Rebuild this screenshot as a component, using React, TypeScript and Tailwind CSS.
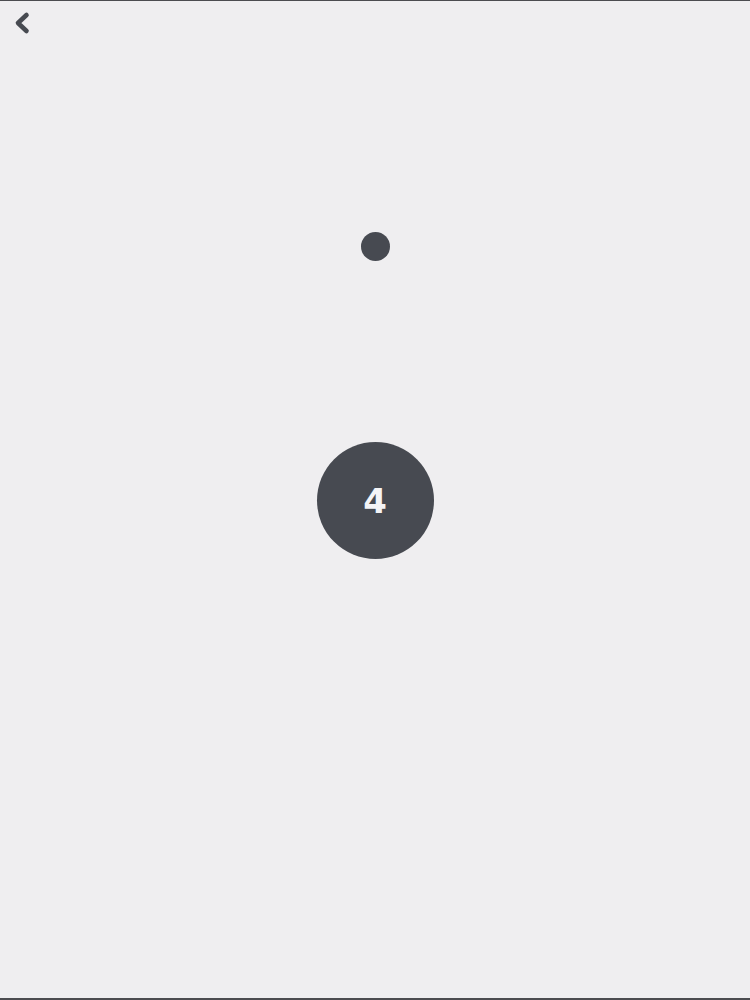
import React from "react";

export default function App() {
  return (
    <div className="h-[1000px] w-full bg-[#efeef0] border-t border-b-2 border-[#4b4c50] flex flex-col" style={{ fontFamily: '"DejaVu Sans", sans-serif' }}>
      <div className="h-[44px] pl-[12px] pt-[10px]">
        <svg width="20" height="24" viewBox="0 0 20 24">
          <path d="M14.5 4 L6 12 L14.5 20" fill="none" stroke="#474a51" strokeWidth="4.6" strokeLinecap="round" strokeLinejoin="round" />
        </svg>
      </div>
      <div className="flex flex-col items-center">
        <div className="mt-[187px] w-[29px] h-[29px] rounded-full bg-[#474a51]" />
        <div className="mt-[181px] w-[117px] h-[117px] rounded-full bg-[#474a51] flex items-center justify-center">
          <span className="text-[#f4f4f6] text-[34px] font-bold leading-none">4</span>
        </div>
      </div>
    </div>
  );
}
